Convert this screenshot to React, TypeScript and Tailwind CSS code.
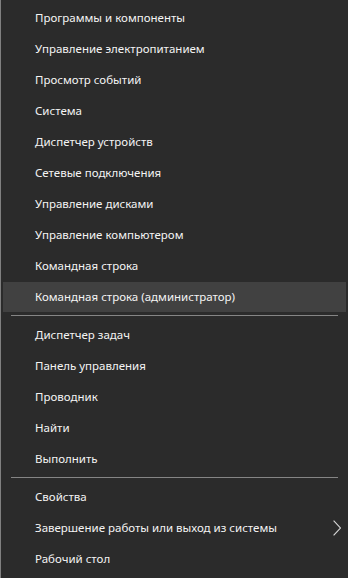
const group1 = [
  "Программы и компоненты",
  "Управление электропитанием",
  "Просмотр событий",
  "Система",
  "Диспетчер устройств",
  "Сетевые подключения",
  "Управление дисками",
  "Управление компьютером",
  "Командная строка",
  "Командная строка (администратор)",
];

const group2 = ["Диспетчер задач", "Панель управления", "Проводник", "Найти", "Выполнить"];

const group3 = ["Свойства", "Завершение работы или выход из системы", "Рабочий стол"];

function Item({ label, active, submenu }: { label: string; active?: boolean; submenu?: boolean }) {
  return (
    <div className="flex h-[31px] items-center">
      <div
        className={`flex h-[30px] flex-1 items-center pl-[32px] pr-[5px] ${active ? "bg-[#414141]" : ""}`}
      >
        <span className="flex-1 text-[11.5px] text-[#f4f4f4]">{label}</span>
        {submenu && (
          <svg width="8" height="16" viewBox="0 0 8 16" fill="none" className="text-[#d8d8d8]">
            <path d="M0.6 0.6l6.8 7.4-6.8 7.4" stroke="currentColor" strokeWidth="1.1" />
          </svg>
        )}
      </div>
    </div>
  );
}

function Separator() {
  return (
    <div className="flex h-[7px] items-center pl-[8px] pr-[8px]">
      <div className="h-px flex-1 bg-[#858585]" />
    </div>
  );
}

export default function App() {
  return (
    <div
      className="flex h-[578px] w-[348px] border-l border-[#808080] bg-[#2b2b2b] pt-[2px] pr-[2px] pl-[2px]"
      style={{ fontFamily: '"Noto Sans", "Open Sans", sans-serif' }}
    >
      <div className="flex flex-1 flex-col">
        {group1.map((l) => (
          <Item key={l} label={l} active={l === "Командная строка (администратор)"} />
        ))}
        <Separator />
        {group2.map((l) => (
          <Item key={l} label={l} />
        ))}
        <Separator />
        {group3.map((l) => (
          <Item key={l} label={l} submenu={l.startsWith("Завершение")} />
        ))}
      </div>
    </div>
  );
}
